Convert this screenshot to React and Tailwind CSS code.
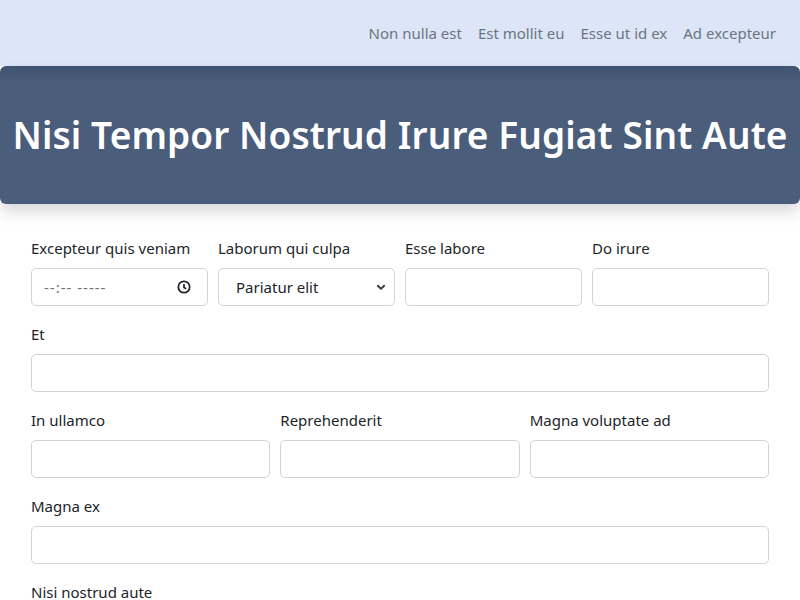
import React from "react";

const font = { fontFamily: '"Noto Sans", "Open Sans", sans-serif' };

function Label({ children }) {
  return <div className="text-[15px] leading-6 text-[#212529] mb-[8px]">{children}</div>;
}

function Input() {
  return <div className="h-[38px] w-full rounded-[5px] border border-[#ced4da] bg-white" />;
}

function Field({ label, children }) {
  return (
    <div className="flex flex-col min-w-0">
      <Label>{label}</Label>
      {children || <Input />}
    </div>
  );
}

export default function App() {
  return (
    <div className="w-[800px] h-[600px] overflow-hidden bg-white" style={font}>
      <nav className="h-[66px] bg-[#dce6f8] flex items-center justify-end pr-6 gap-4">
        {["Non nulla est", "Est mollit eu", "Esse ut id ex", "Ad excepteur"].map((t) => (
          <span key={t} className="text-[15px] text-[#6c757d]">{t}</span>
        ))}
      </nav>
      <header className="h-[138px] rounded-[6px] bg-gradient-to-b from-[#425271] via-[#4a5d7b] via-[12%] to-[#4a5d7b] shadow-[0_8px_16px_rgba(0,0,0,0.15)] flex items-center justify-center">
        <h1 className="text-white text-[37px] font-semibold tracking-[0.1px] whitespace-nowrap">
          Nisi Tempor Nostrud Irure Fugiat Sint Aute
        </h1>
      </header>
      <main className="px-[31px] pt-[32px] flex flex-col gap-[16px]">
        <div className="grid grid-cols-4 gap-[10px]">
          <Field label="Excepteur quis veniam">
            <div className="h-[38px] rounded-[5px] border border-[#ced4da] bg-white flex items-center justify-between pl-3 pr-[16px]">
              <span className="text-[15px] text-[#6c757d] tracking-[1px]">--:-- -----</span>
              <svg width="14" height="14" viewBox="0 0 16 16" fill="none" stroke="#212529" strokeWidth="2">
                <circle cx="8" cy="8" r="6.5" />
                <path d="M8 4.5V8.5L10.5 10" />
              </svg>
            </div>
          </Field>
          <Field label="Laborum qui culpa">
            <div className="h-[38px] rounded-[5px] border border-[#ced4da] bg-white flex items-center justify-between pl-[17px] pr-[8px]">
              <span className="text-[15px] text-[#212529]">Pariatur elit</span>
              <svg width="10" height="10" viewBox="0 0 16 16" fill="none" stroke="#343a40" strokeWidth="3" strokeLinecap="round" strokeLinejoin="round">
                <path d="M3 6l5 5 5-5" />
              </svg>
            </div>
          </Field>
          <Field label="Esse labore" />
          <Field label="Do irure" />
        </div>
        <Field label="Et" />
        <div className="grid grid-cols-3 gap-[10px]">
          <Field label="In ullamco" />
          <Field label="Reprehenderit" />
          <Field label="Magna voluptate ad" />
        </div>
        <Field label="Magna ex" />
        <Field label="Nisi nostrud aute" />
      </main>
    </div>
  );
}
